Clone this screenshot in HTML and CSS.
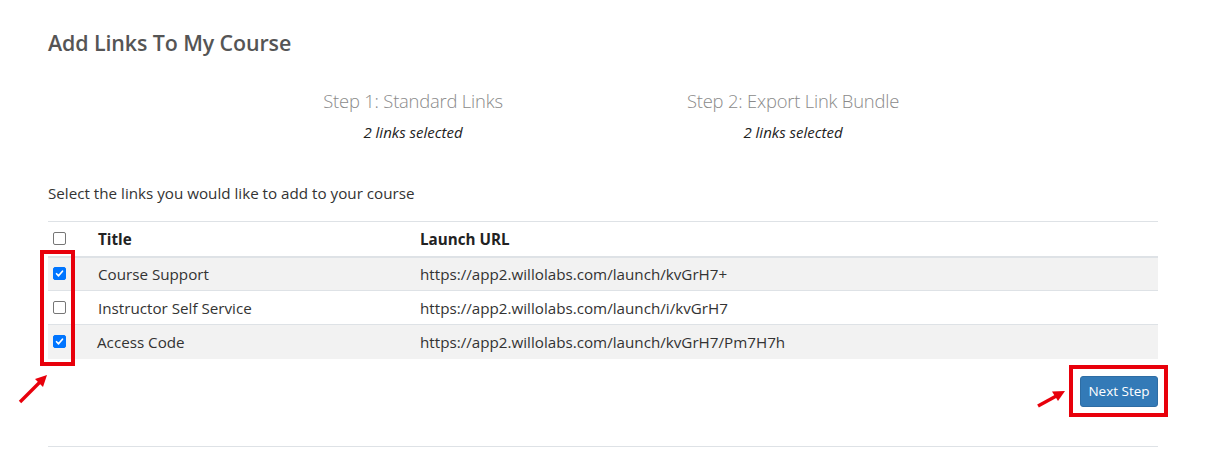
FILE: index.html
```html
<!DOCTYPE html>
<html>
<head>
<meta charset="utf-8">
<link rel="stylesheet" href="styles.css">
</head>
<body>
<div class="page">
  <h1 class="title">Add Links To My Course</h1>
  <div class="steps">
    <div class="step">
      <div class="step-name">Step 1: Standard Links</div>
      <div class="step-count">2 links selected</div>
    </div>
    <div class="step">
      <div class="step-name">Step 2: Export Link Bundle</div>
      <div class="step-count">2 links selected</div>
    </div>
  </div>
  <p class="intro">Select the links you would like to add to your course</p>
  <div class="table-wrap">
    <table class="links">
      <thead>
        <tr>
          <th class="c-check"><span class="cb"></span></th>
          <th class="c-title">Title</th>
          <th class="c-url">Launch URL</th>
        </tr>
      </thead>
      <tbody>
        <tr class="odd">
          <td class="c-check"><span class="cb checked"><svg viewBox="0 0 13 13"><path d="M3 6.8 L5.4 9.2 L10 3.8" fill="none" stroke="#fff" stroke-width="2" stroke-linecap="round" stroke-linejoin="round"/></svg></span></td>
          <td class="c-title">Course Support</td>
          <td class="c-url">https://app2.willolabs.com/launch/kvGrH7+</td>
        </tr>
        <tr>
          <td class="c-check"><span class="cb"></span></td>
          <td class="c-title">Instructor Self Service</td>
          <td class="c-url">https://app2.willolabs.com/launch/i/kvGrH7</td>
        </tr>
        <tr class="odd">
          <td class="c-check"><span class="cb checked"><svg viewBox="0 0 13 13"><path d="M3 6.8 L5.4 9.2 L10 3.8" fill="none" stroke="#fff" stroke-width="2" stroke-linecap="round" stroke-linejoin="round"/></svg></span></td>
          <td class="c-title c-shift">Access Code</td>
          <td class="c-url">https://app2.willolabs.com/launch/kvGrH7/Pm7H7h</td>
        </tr>
      </tbody>
    </table>
    <div class="mark mark-checks"></div>
  </div>
  <div class="actions">
    <button class="btn">Next Step</button>
    <div class="mark mark-btn"></div>
  </div>
  <hr class="rule">
</div>
<svg class="arrow arrow-left" viewBox="0 0 40 40" width="40" height="40">
  <path d="M4 34 L26 12" stroke="#e8000b" stroke-width="3.4" stroke-linecap="butt" fill="none"/>
  <path d="M31 7 L19 11 L27 19 Z" fill="#e8000b"/>
</svg>
<svg class="arrow arrow-right" viewBox="0 0 40 30" width="40" height="30">
  <path d="M4 22 L26 10" stroke="#e8000b" stroke-width="3.4" fill="none"/>
  <path d="M31 7 L18 7.5 L24 17 Z" fill="#e8000b"/>
</svg>
</body>
</html>
```

FILE: styles.css
```css
* { box-sizing: border-box; }
html, body { margin: 0; padding: 0; background: #fff; }
body {
  font-family: "Open Sans", "Noto Sans", sans-serif;
  color: #333;
  position: relative;
  width: 1220px;
  height: 463px;
  overflow: hidden;
}
.page {
  padding: 28px 62px 0 48px;
}
.title {
  margin: 0;
  font-size: 21.4px;
  font-weight: 600;
  color: #555;
  line-height: 30px;
  letter-spacing: -0.1px;
}
.steps {
  display: flex;
  justify-content: center;
  margin-top: 31px;
}
.step {
  width: 380px;
  text-align: center;
}
.step-name {
  font-size: 18.4px;
  font-weight: 300;
  color: #8a8a8a;
  line-height: 24px;
  letter-spacing: -0.2px;
}
.step-count {
  font-size: 15px;
  font-style: italic;
  color: #222;
  margin-top: 9px;
  line-height: 20px;
}
.intro {
  margin: 41px 0 0 0;
  font-size: 15.2px;
  line-height: 20px;
  color: #333;
}
.table-wrap {
  position: relative;
  margin-top: 18px;
}
.links {
  width: 100%;
  border-collapse: collapse;
  font-size: 15.2px;
  color: #333;
}
.links th, .links td {
  text-align: left;
  padding: 0 8px;
  height: 34px;
  border-top: 1px solid #dee2e6;
  vertical-align: middle;
  line-height: 20px;
}
.links thead th {
  height: 35px;
  border-bottom: 2px solid #dee2e6;
  font-weight: 700;
  color: #222;
}
.links tbody tr.odd td { background: #f2f2f2; }
.c-check { width: 42px; padding-left: 5px !important; }
.c-title { width: 322px; }
.c-shift { padding-left: 7px !important; }
.cb {
  display: block;
  width: 13px;
  height: 13px;
  border: 1px solid #767676;
  border-radius: 2px;
  background: #fff;
}
.cb.checked {
  background: #0075ff;
  border-color: #0075ff;
}
.cb svg { display: block; width: 11px; height: 11px; }
.mark {
  position: absolute;
  border: 4px solid #e8000b;
}
.mark-checks {
  left: -8px;
  top: 29px;
  width: 35px;
  height: 116px;
}
.actions {
  position: relative;
  display: flex;
  justify-content: flex-end;
  margin-top: 17px;
}
.btn {
  width: 78px;
  height: 31px;
  background: #337ab7;
  color: #fff;
  border: 1px solid #2e6da4;
  border-radius: 3px;
  font-family: inherit;
  font-size: 13.5px;
  padding: 0;
}
.mark-btn {
  right: -10px;
  top: -11px;
  width: 99px;
  height: 52px;
}
.rule {
  margin: 39px 0 0 0;
  border: 0;
  border-top: 1px solid #dee2e6;
}
.arrow { position: absolute; }
.arrow-left { left: 16px; top: 368px; }
.arrow-right { left: 1034px; top: 384px; }
```
